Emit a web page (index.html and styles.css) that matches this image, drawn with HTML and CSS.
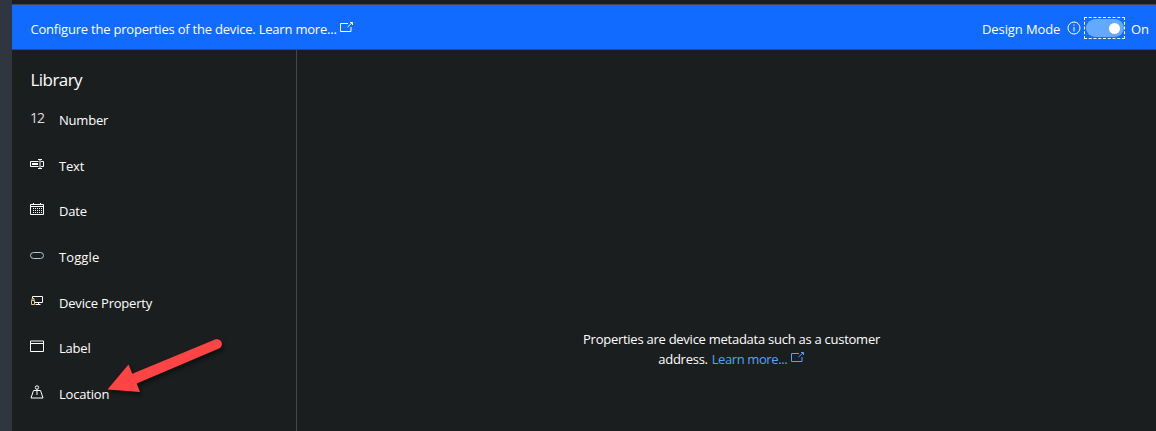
FILE: index.html
```html
<!DOCTYPE html>
<html lang="en">
<head>
<meta charset="utf-8">
<title>Device properties</title>
<link rel="stylesheet" href="styles.css">
</head>
<body>
<div class="app">
  <div class="rail"></div>
  <div class="page">
    <header class="banner">
      <p class="banner-text">Configure the properties of the device. Learn more...</p>
      <svg class="external" viewBox="0 0 14 12"><path d="M8 2.500H.5v8h10.500V6M7.500 6l5-4.500M10 1.500h2.500V4"/></svg>
      <div class="mode">
        <span class="mode-label">Design Mode</span>
        <svg class="info" viewBox="0 0 14 14"><circle cx="7" cy="7" r="6"/><path d="M7 6v4.500M7 3.500v1.200"/></svg>
        <span class="focus"><span class="switch"><span class="knob"></span></span></span>
        <span class="mode-state">On</span>
      </div>
    </header>
    <div class="body">
      <aside class="library">
        <h1 class="title">Library</h1>
        <ul class="list">
          <li class="item"><span class="icon number">12</span><span>Number</span></li>
          <li class="item"><svg class="icon" viewBox="0 0 14 14"><path d="M8.500 4.500h-8v5h8M11 4.500h2.500v5H11M2 6.500h6M2 7.500h6M8 2.500h4M8 11.500h4M10 2.500v9"/></svg><span>Text</span></li>
          <li class="item"><svg class="icon" viewBox="0 0 14 14"><path d="M.5 2.500h13v10H.5zM.5 4.500h13M3.500 1v2M10.500 1v2"/><path class="dots" d="M3 6.500h9M3 8.500h9M3 10.500h9"/></svg><span>Date</span></li>
          <li class="item"><svg class="icon pill" viewBox="0 0 14 14"><rect x=".5" y="4.500" width="13" height="6" rx="3"/></svg><span class="wide">Toggle</span></li>
          <li class="item"><svg class="icon" viewBox="0 0 14 14"><path d="M2.500 5V2.500h10v6H5M8.500 8.500v2M5.500 10.500h5"/><path class="warm" d="M1.500 6.500h3v4h-3zM2 6V4.500h2V6"/></svg><span>Device Property</span></li>
          <li class="item"><svg class="icon" viewBox="0 0 14 14"><path d="M.5 2h13v10.500H.5zM.5 4.500h13"/></svg><span>Label</span></li>
          <li class="item"><svg class="icon" viewBox="0 0 14 14"><circle cx="7" cy="2.500" r="1.700"/><path d="M7 4.200V10M5.500 5.500H3.500l-2.500 7.500h12l-2.500-7.500H8.500M4 5.500h6"/></svg><span>Location</span></li>
        </ul>
      </aside>
      <main class="canvas">
        <p class="hint"><span class="line">Properties are device metadata such as a customer</span><span class="line"><span>address.</span><a class="link">Learn more...</a><svg class="external" viewBox="0 0 14 12"><path d="M8 2.500H.5v8h10.500V6M7.500 6l5-4.500M10 1.500h2.500V4"/></svg></span></p>
      </main>
    </div>
  </div>
  <svg class="arrow" viewBox="0 0 130 70"><path d="M7.500 59.500 28.500 34.500 32.300 43.800 115 9.500A4.500 4.500 0 0 1 119 18.500L36.700 53.500 40 62Z"/></svg>
</div>
</body>
</html>
```
FILE: styles.css
```css
* { box-sizing: border-box; }
body { margin: 0; background: #1b1e1e; color: #fff; font: 13px/20px "Open Sans", "Noto Sans", sans-serif; letter-spacing: -.2px; overflow: hidden; }
p, h1, ul { margin: 0; padding: 0; }
svg { fill: none; stroke: currentColor; flex: none; }
.app { display: flex; height: 431px; }
.rail { flex: 0 0 12px; background: #30363f; }
.page { flex: 1; min-width: 0; padding-top: 4px; display: flex; flex-direction: column; }
.banner { height: 46px; display: flex; align-items: center; padding: 4px 8px 0 18.500px; background: #126bff; border-top: 1px solid #474747; border-bottom: 1px solid #474747; white-space: nowrap; }
.banner-text { width: 306px; letter-spacing: -.21px; }
.external { width: 14px; height: 12px; margin-left: 3.500px; margin-top: -5px; }
.mode { margin-left: auto; display: flex; align-items: center; letter-spacing: -.1px; }
.mode-label { width: 85px; }
.info { width: 14px; height: 14px; margin-top: -2px; }
.focus { width: 41px; height: 22px; margin: -2px 6px 0 3px; border: 1px dashed #fff; padding: 1px; }
.switch { display: flex; align-items: center; justify-content: flex-end; width: 38px; height: 18px; border-radius: 9px; background: #62a9ff; padding-right: 4px; }
.knob { width: 11px; height: 11px; border-radius: 50%; background: #fff; }
.mode-state { width: 17px; }
.body { flex: 1; min-height: 0; display: flex; }
.library { flex: 0 0 285px; border-right: 1px solid #474747; padding: 18px 0 0 18px; }
.title { font-size: 17px; font-weight: 400; line-height: 24px; letter-spacing: -.55px; padding-left: .5px; }
.list { list-style: none; padding-top: 5.500px; }
.item { display: flex; align-items: center; gap: 15px; height: 45.600px; }
.icon { width: 14px; height: 14px; margin-top: -4px; }
.number { font-size: 14px; line-height: 14px; letter-spacing: -1px; color: #ddd; }
.wide { letter-spacing: .1px; }
.dots { stroke-dasharray: 1 1; }
.pill { stroke: #b9c4cc; }
.warm { stroke: #e9c78e; }
.canvas { flex: 1; min-width: 0; padding-top: 279px; }
.hint { width: 869px; display: flex; flex-direction: column; align-items: center; white-space: nowrap; letter-spacing: -.26px; }
.line { display: flex; align-items: center; }
.link { color: #58a0ff; margin-left: 4px; letter-spacing: -.4px; }
.hint .external { color: #58a0ff; }
.arrow { position: absolute; left: 99.500px; top: 330px; width: 130px; height: 70px; fill: #fe4444; stroke: none; overflow: visible; filter: drop-shadow(2px 3px 2px rgba(0,0,0,.45)); }
```
